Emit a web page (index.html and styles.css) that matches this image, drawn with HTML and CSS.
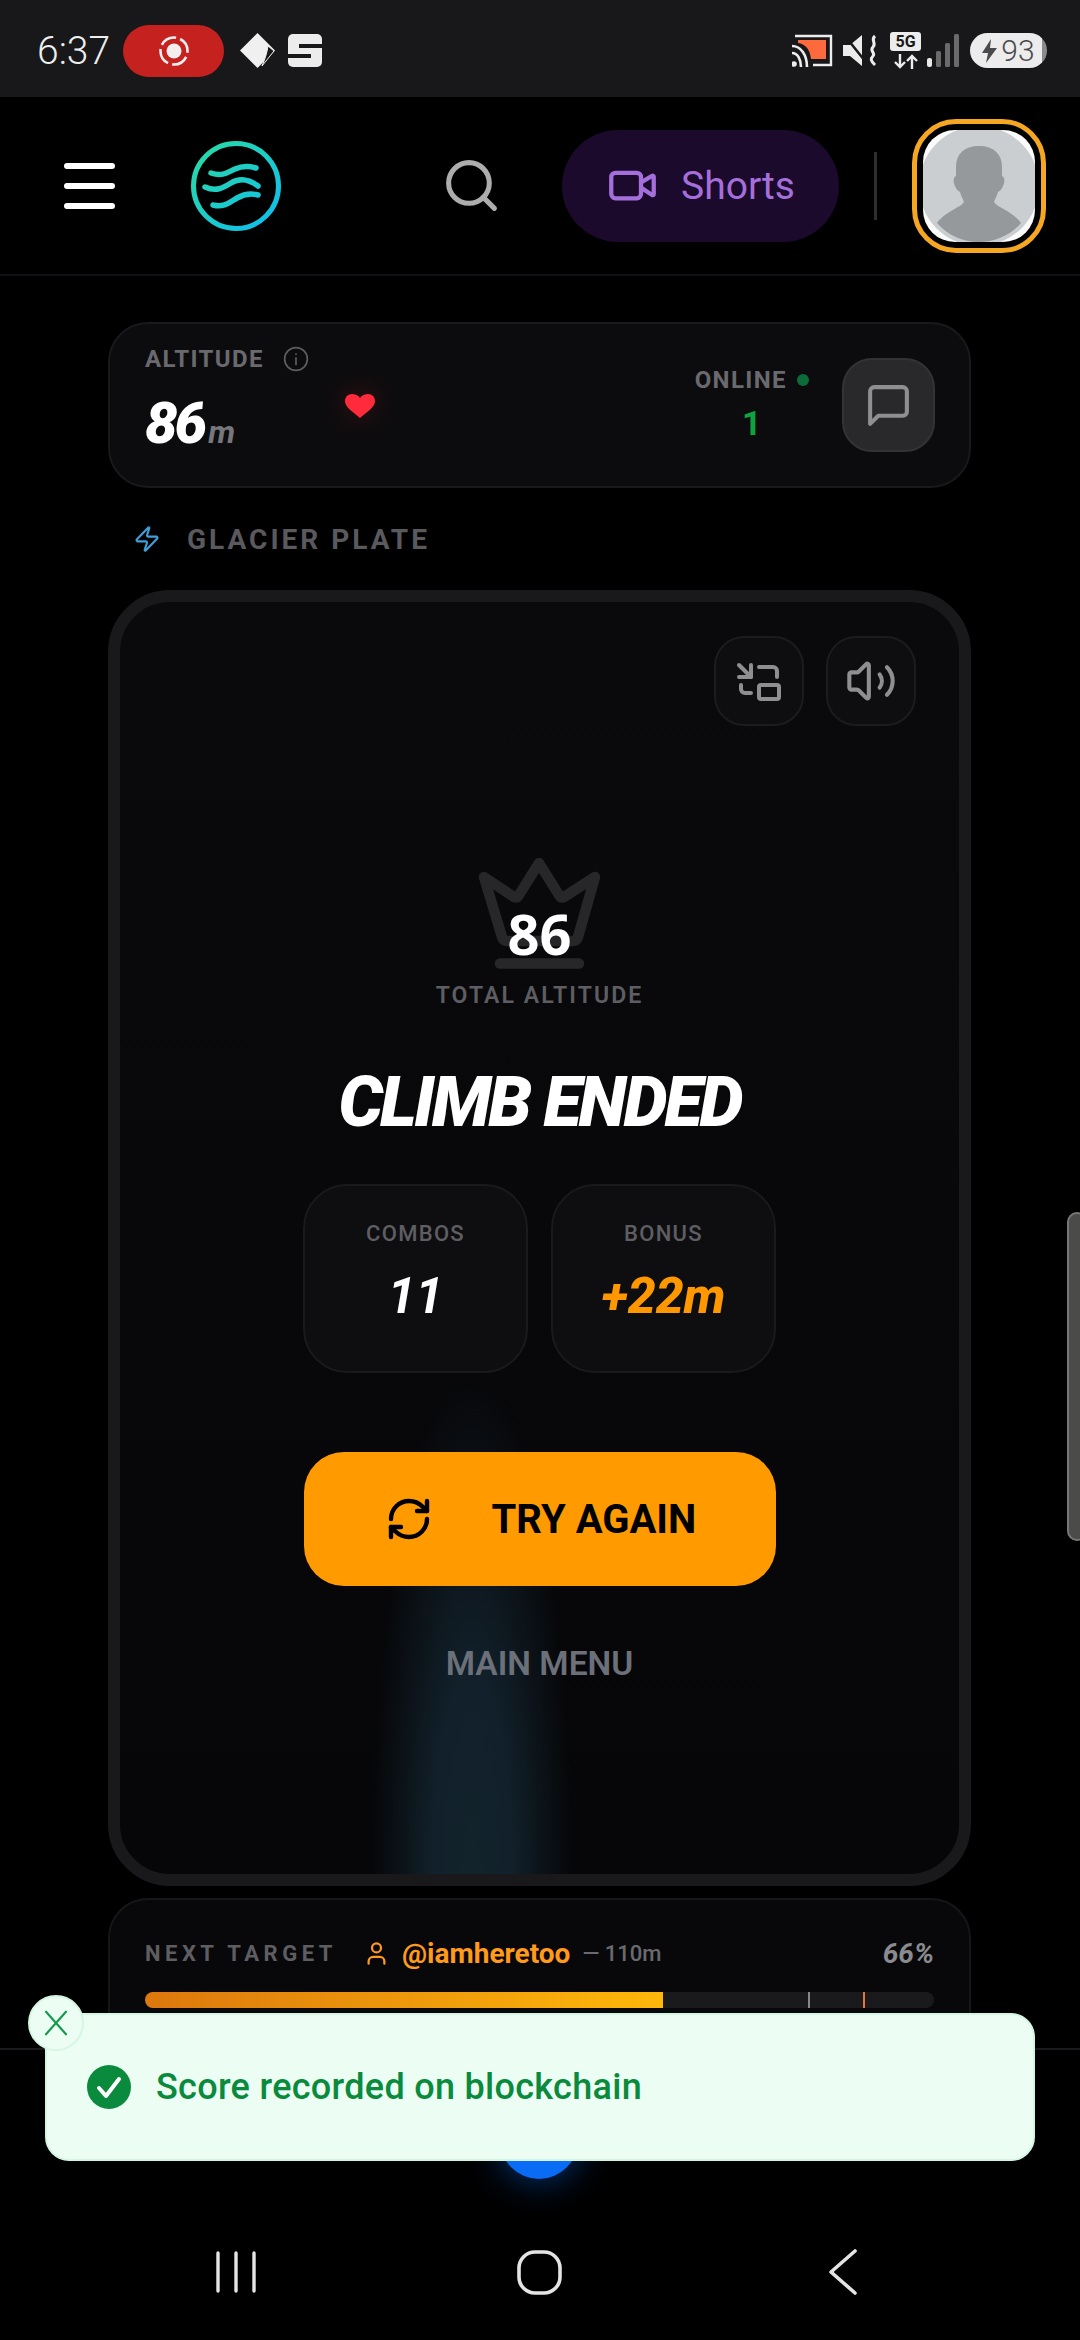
FILE: index.html
```html
<!DOCTYPE html>
<html lang="en">
<head>
    <meta charset="UTF-8">
    <meta name="viewport" content="width=device-width, initial-scale=1.0">
    <title>Glacier Plate</title>
    <link rel="stylesheet" href="styles.css">
</head>
<body>
<div class="screen">
    <div class="status-bar">
        <span class="status-time">6:37</span>
        <span class="rec-pill">
            <svg width="34" height="34" viewBox="0 0 34 34" fill="none" stroke="#f4eeee" stroke-width="2.6">
                <circle cx="17" cy="17" r="7.5" fill="#f4eeee" stroke="none"/>
                <circle cx="17" cy="17" r="13.5" stroke-dasharray="17 4.2" stroke-dashoffset="-6"/>
            </svg>
        </span>
        <svg class="status-diamond" width="35" height="35" viewBox="0 0 35 35">
            <path d="M17.500 0 35 17.500 17.500 35 0 17.500z" fill="#f0f0f0"/>
            <path d="M22 33 34 18 28 13c-1 7-3 13-6 20z" fill="#18181a" stroke="#f0f0f0" stroke-width="1"/>
        </svg>
        <svg class="status-s" width="34" height="33" viewBox="0 0 34 33">
            <rect width="34" height="33" rx="5" fill="#ececec"/>
            <rect x="11" y="10" width="23" height="4" fill="#18181a"/>
            <rect x="0" y="20" width="23" height="4" fill="#18181a"/>
        </svg>
        <div class="status-right">
            <svg width="41" height="33" viewBox="0 0 41 33" fill="none">
                <path d="M3 2h36v29H21" stroke="#ececec" stroke-width="2.4"/>
                <path d="M6 6h28v19H19C18 16 14 10 6 9z" fill="#ff6a3c"/>
                <path d="M0 12c9 0 15 9 15 21M0 19c6 0 9 7 9 14" stroke="#ececec" stroke-width="2.6"/>
                <circle cx="2" cy="30" r="2.800" fill="#ececec"/>
            </svg>
            <svg class="status-mute" width="35" height="33" viewBox="0 0 35 33" fill="none">
                <path d="M0 11h7L19 1v31L7 22H0z" fill="#ececec"/>
                <path d="M2 2 22 27" stroke="#18181a" stroke-width="2.500"/>
                <path d="M32 2c-5 4 2 7-2 11s3 6 0 9-2 5 2 9" stroke="#ececec" stroke-width="3"/>
            </svg>
            <span class="net-badge">
                <span class="net-5g">5G</span>
                <svg width="26" height="15" viewBox="0 0 26 15" fill="none" stroke="#ececec" stroke-width="2.400">
                    <path d="M7 0v13M2 8l5 5 5-5M19 15V2M14 7l5-5 5 5"/>
                </svg>
            </span>
            <svg width="32" height="33" viewBox="0 0 32 33">
                <rect x="0" y="24" width="5" height="9" rx="2" fill="#e8e8e8"/>
                <rect x="9" y="17" width="5" height="16" rx="1.500" fill="#6a6a6a"/>
                <rect x="18" y="9" width="5" height="24" rx="1.500" fill="#6a6a6a"/>
                <rect x="27" y="0" width="5" height="33" rx="1.500" fill="#6a6a6a"/>
            </svg>
            <span class="battery">
                <svg width="15" height="24" viewBox="0 0 15 24"><path d="M9 0 0 14h6l-2 10 11-15H8z" fill="#4a4a4c"/></svg>
                <span>93</span>
            </span>
        </div>
    </div>

    <header class="top-nav">
        <div class="menu-icon"><i></i><i></i><i></i></div>
        <svg class="logo" width="90" height="90" viewBox="0 0 90 90" fill="none" stroke="url(#logoGrad)" stroke-linecap="round">
            <defs>
                <linearGradient id="logoGrad" x1="0" y1="0" x2="90" y2="90" gradientUnits="userSpaceOnUse">
                    <stop offset="0" stop-color="#2bdc9f"/>
                    <stop offset="1" stop-color="#0dbcf2"/>
                </linearGradient>
            </defs>
            <circle cx="45" cy="45" r="42.500" stroke-width="5"/>
            <path d="M20 32c12 4 17-1 24-4s14-3 21-1" stroke-width="5.500"/>
            <path d="M14 46c11 5 18 1 26-4s18-4 27 3" stroke-width="5.500"/>
            <path d="M22 64c11 3 17-3 24-7s13-5 21-3" stroke-width="5.500"/>
        </svg>
        <div class="nav-right">
            <svg class="search-icon" width="61" height="61" viewBox="0 0 24 24" fill="none" stroke="#adadad" stroke-width="2" stroke-linecap="round">
                <circle cx="11" cy="11" r="8"/>
                <path d="m21 21-4.340-4.340"/>
            </svg>
            <div class="shorts-pill">
                <svg width="51" height="51" viewBox="0 0 24 24" fill="none" stroke="#a56fdb" stroke-width="2" stroke-linecap="round" stroke-linejoin="round">
                    <path d="m16 13 5.223 3.482a.5.5 0 0 0 .777-.416V7.870a.5.5 0 0 0-.752-.432L16 10.500"/>
                    <rect x="2" y="6" width="14" height="12" rx="2"/>
                </svg>
                <span>Shorts</span>
            </div>
            <div class="nav-divider"></div>
            <div class="avatar-ring">
                <svg class="avatar" width="112" height="112" viewBox="0 0 112 112">
                    <rect width="112" height="112" fill="#fbfbfb"/>
                    <circle cx="56" cy="56" r="60" fill="#cbced1"/>
                    <path d="M56 16c-15 0-23 8-23 21v9c-3 1-3 6-1 10 1 3 3 5 5 6 1 4 3 7 4 10-4 6-18 9-27 21 10 12 26 19 42 19s32-7 42-19c-9-12-23-15-27-21 1-3 3-6 4-10 2-1 4-3 5-6 2-4 2-9-1-10v-9c0-13-8-21-23-21z" fill="#96999b"/>
                </svg>
            </div>
        </div>
    </header>

    <main class="content">
        <section class="altitude-card">
            <div class="altitude-left">
                <div class="small-label">ALTITUDE
                    <svg width="26" height="26" viewBox="0 0 24 24" fill="none" stroke="#5c5c60" stroke-width="1.600" stroke-linecap="round">
                        <circle cx="12" cy="12" r="10.500"/>
                        <path d="M12 11v6M12 7.500v.1"/>
                    </svg>
                </div>
                <div class="altitude-value">86<span>m</span></div>
            </div>
            <svg class="heart" width="30" height="24" viewBox="0 0 30 24">
                <path d="M15 24C7 17 0 13 0 7c0-4 3-7 7-7 3 0 6 1 8 4 2-3 5-4 8-4 4 0 7 3 7 7 0 6-7 10-15 17z" fill="#ff2b3a"/>
            </svg>
            <div class="online">
                <div class="small-label">ONLINE <i class="online-dot"></i></div>
                <div class="online-count">1</div>
            </div>
            <button class="chat-btn">
                <svg width="49" height="49" viewBox="0 0 24 24" fill="none" stroke="#8f8f92" stroke-width="2" stroke-linejoin="round">
                    <path d="M21 15a2 2 0 0 1-2 2H7l-4 4V5a2 2 0 0 1 2-2h14a2 2 0 0 1 2 2z"/>
                </svg>
            </button>
        </section>

        <div class="plate-row">
            <svg width="28" height="28" viewBox="0 0 24 24" fill="none" stroke="#3f9fd8" stroke-width="1.800" stroke-linejoin="round">
                <path d="M4 14a1 1 0 0 1-.78-1.630l9.900-10.200a.5.5 0 0 1 .86.460l-1.920 6.020A1 1 0 0 0 13 10h7a1 1 0 0 1 .78 1.630l-9.900 10.200a.5.5 0 0 1-.86-.460l1.920-6.020A1 1 0 0 0 11 14z"/>
            </svg>
            <span>GLACIER PLATE</span>
        </div>

        <section class="game-card">
            <div class="beam"></div>
            <div class="game-controls">
                <button class="ctrl-btn">
                    <svg width="48" height="48" viewBox="0 0 24 24" fill="none" stroke="#8f8f92" stroke-width="2" stroke-linecap="round" stroke-linejoin="round">
                        <path d="M2 10h6V4"/>
                        <path d="m2 4 6 6"/>
                        <path d="M21 10V7a2 2 0 0 0-2-2h-7"/>
                        <path d="M3 14v2a2 2 0 0 0 2 2h3"/>
                        <rect x="12" y="14" width="10" height="7" rx="1"/>
                    </svg>
                </button>
                <button class="ctrl-btn">
                    <svg width="52" height="52" viewBox="0 0 24 24" fill="none" stroke="#8f8f92" stroke-width="1.900" stroke-linecap="round" stroke-linejoin="round">
                        <path d="M11 4.702a.705.705 0 0 0-1.203-.498L6.413 7.587A1.400 1.400 0 0 1 5.416 8H3a1 1 0 0 0-1 1v6a1 1 0 0 0 1 1h2.416a1.400 1.400 0 0 1 .997.413l3.383 3.384A.705.705 0 0 0 11 19.298z"/>
                        <path d="M16 9a5 5 0 0 1 0 6"/>
                        <path d="M19.364 18.364a9 9 0 0 0 0-12.728"/>
                    </svg>
                </button>
            </div>

            <div class="crown-wrap">
                <svg width="123" height="114" viewBox="0 0 123 114" fill="none" stroke="#27272a" stroke-width="10.500" stroke-linecap="round" stroke-linejoin="round">
                    <path d="M6 21 36 41c2 1 3 1 5-2L61 7l20 32c2 3 3 3 5 2l31-20-17 60c-1 3-2 4-5 4H29c-3 0-4-1-5-4z"/>
                    <path d="M22 107.500h79"/>
                </svg>
                <span class="crown-score">86</span>
            </div>
            <div class="total-label">TOTAL ALTITUDE</div>
            <h1 class="game-title">CLIMB ENDED</h1>

            <div class="stats">
                <div class="stat-box">
                    <div class="stat-label">COMBOS</div>
                    <div class="stat-value">11</div>
                </div>
                <div class="stat-box">
                    <div class="stat-label">BONUS</div>
                    <div class="stat-value orange">+22m</div>
                </div>
            </div>

            <button class="try-btn">
                <svg width="48" height="48" viewBox="0 0 24 24" fill="none" stroke="#000" stroke-width="2.200" stroke-linecap="round" stroke-linejoin="round">
                    <path d="M3 12a9 9 0 0 1 9-9 9.750 9.750 0 0 1 6.740 2.740L21 8"/>
                    <path d="M21 3v5h-5"/>
                    <path d="M21 12a9 9 0 0 1-9 9 9.750 9.750 0 0 1-6.740-2.740L3 16"/>
                    <path d="M8 16H3v5"/>
                </svg>
                <span>TRY AGAIN</span>
            </button>
            <div class="main-menu">MAIN MENU</div>
        </section>

        <section class="target-card">
            <div class="target-row">
                <span class="target-label">NEXT TARGET</span>
                <svg width="27" height="27" viewBox="0 0 24 24" fill="none" stroke="#ff9a1a" stroke-width="2" stroke-linecap="round">
                    <path d="M19 21v-2a4 4 0 0 0-4-4H9a4 4 0 0 0-4 4v2"/>
                    <circle cx="12" cy="7" r="4"/>
                </svg>
                <span class="target-name">@iamheretoo</span>
                <span class="target-dist">— 110m</span>
                <span class="target-pct">66%</span>
            </div>
            <div class="progress">
                <div class="progress-fill" style="width: 65.7%"></div>
                <i class="tick tick-gray"></i>
                <i class="tick tick-orange"></i>
            </div>
        </section>
    </main>

    <nav class="bottom-bar">
        <div class="blue-fab"></div>
        <div class="android-nav">
            <svg width="40" height="42" viewBox="0 0 40 42" fill="none" stroke="#e4e4e4" stroke-width="3.400" stroke-linecap="round">
                <path d="M2 2v38M20 2v38M38 2v38"/>
            </svg>
            <svg width="45" height="45" viewBox="0 0 45 45" fill="none" stroke="#e4e4e4" stroke-width="3.600">
                <rect x="2" y="2" width="41" height="41" rx="16"/>
            </svg>
            <svg width="29" height="46" viewBox="0 0 29 46" fill="none" stroke="#e4e4e4" stroke-width="3.600" stroke-linecap="round" stroke-linejoin="round">
                <path d="M27 2 3 23l24 21"/>
            </svg>
        </div>
    </nav>

    <div class="toast">
        <button class="toast-close">
            <svg width="30" height="30" viewBox="0 0 24 24" fill="none" stroke="#159a4b" stroke-width="1.700" stroke-linecap="round">
                <path d="M4 3l16 18M20 3 4 21"/>
            </svg>
        </button>
        <svg width="44" height="44" viewBox="0 0 44 44" fill="none">
            <circle cx="22" cy="22" r="22" fill="#0a8a3c"/>
            <path d="M12 23l7 8 13-17" stroke="#fff" stroke-width="4" stroke-linecap="round" stroke-linejoin="round"/>
        </svg>
        <span>Score recorded on blockchain</span>
    </div>

    <div class="scroll-thumb"></div>
</div>
</body>
</html>
```

FILE: styles.css
```css
* {
    box-sizing: border-box;
}

body {
    margin: 0;
    background-color: #000;
    font-family: Roboto, "Liberation Sans", sans-serif;
}

button {
    border: none;
    padding: 0;
    font-family: inherit;
}

.screen {
    position: relative;
    width: 1080px;
    height: 2340px;
    overflow: hidden;
    background-color: #000;
}

/* status bar */
.status-bar {
    display: flex;
    align-items: center;
    height: 97px;
    padding: 4px 33px 0 37px;
    background-color: #18181a;
}

.status-time {
    width: 72px;
    margin-right: 14px;
    font-size: 39px;
    font-weight: 300;
    color: #eee;
}

.rec-pill {
    display: flex;
    align-items: center;
    justify-content: center;
    width: 101px;
    height: 52px;
    margin-right: 16px;
    border-radius: 26px;
    background-color: #c4211f;
}

.status-diamond {
    margin-right: 13px;
}

.status-right {
    display: flex;
    align-items: center;
    gap: 6px;
    margin-left: auto;
}

.status-mute {
    margin-left: 4px;
}

.net-badge {
    display: flex;
    flex-direction: column;
    align-items: center;
    gap: 3px;
    width: 31px;
    margin-left: 6px;
}

.net-5g {
    width: 31px;
    height: 19px;
    border-radius: 3px;
    background-color: #ececec;
    color: #18181a;
    font-size: 16px;
    font-weight: 700;
    line-height: 19px;
    text-align: center;
}

.battery {
    display: flex;
    align-items: center;
    justify-content: center;
    gap: 4px;
    width: 77px;
    height: 35px;
    margin-left: 5px;
    border-radius: 18px;
    background: linear-gradient(90deg, #ececec 94%, #8a8a8a 94%);
    color: #4a4a4c;
    font-size: 30px;
    font-weight: 300;
}

/* top nav */
.top-nav {
    display: flex;
    align-items: center;
    height: 179px;
    padding: 0 34px 0 64px;
    border-bottom: 2px solid #111113;
}

.menu-icon {
    display: flex;
    flex-direction: column;
    gap: 14px;
    width: 51px;
    margin-right: 76px;
}

.menu-icon i {
    height: 6px;
    border-radius: 3px;
    background-color: #fff;
}

.nav-right {
    display: flex;
    align-items: center;
    margin-left: auto;
}

.search-icon {
    margin-right: 60px;
}

.shorts-pill {
    display: flex;
    align-items: center;
    gap: 23px;
    width: 277px;
    height: 112px;
    padding-left: 45px;
    border-radius: 56px;
    background-color: #1b0a2c;
    color: #a56fdb;
    font-size: 39px;
}

.nav-divider {
    width: 3px;
    height: 68px;
    margin: 0 35px;
    background-color: #2e2e30;
}

.avatar-ring {
    width: 134px;
    height: 134px;
    padding: 6px;
    border: 5px solid #f5a623;
    border-radius: 44px;
    background-color: #000;
}

.avatar {
    display: block;
    border-radius: 32px;
}

/* page content */
.content {
    display: flex;
    flex-direction: column;
    padding: 46px 109px 0 108px;
}

.altitude-card {
    position: relative;
    display: flex;
    align-items: center;
    flex-shrink: 0;
    height: 166px;
    padding: 0 34px 0 35px;
    border: 2px solid #19191b;
    border-radius: 40px;
    background-color: #0c0c0e;
}

.small-label {
    display: flex;
    align-items: center;
    gap: 19px;
    font-size: 24px;
    font-weight: 700;
    line-height: 24px;
    letter-spacing: 1.400px;
    color: #6a6a6e;
}

.altitude-left {
    width: 200px;
    margin-top: -2px;
}

.altitude-value {
    margin-top: 20px;
    font-size: 58px;
    font-weight: 900;
    font-style: italic;
    line-height: 62px;
    letter-spacing: -3px;
    color: #fff;
}

.altitude-value span {
    margin-left: 4px;
    font-size: 32px;
    font-weight: 700;
    letter-spacing: 0;
    color: #77777b;
}

.heart {
    margin-top: 2px;
    filter: drop-shadow(0 0 14px rgba(255, 40, 40, 0.25));
}

.online {
    margin-left: auto;
    margin-right: 33px;
    text-align: center;
}

.online .small-label {
    gap: 10px;
}

.online-dot {
    display: inline-block;
    width: 12px;
    height: 12px;
    border-radius: 50%;
    background-color: #0d6b3a;
}

.online-count {
    margin-top: 11px;
    font-size: 34px;
    font-weight: 700;
    line-height: 40px;
    color: #0ea33f;
}

.chat-btn {
    display: flex;
    align-items: center;
    justify-content: center;
    width: 93px;
    height: 94px;
    border: 2px solid #333336;
    border-radius: 30px;
    background-color: #29292c;
}

.plate-row {
    display: flex;
    align-items: center;
    gap: 26px;
    height: 102px;
    padding-left: 25px;
    font-size: 28px;
    font-weight: 700;
    letter-spacing: 3px;
    color: #5a5a5e;
}

.game-card {
    position: relative;
    display: flex;
    flex-direction: column;
    align-items: center;
    flex-shrink: 0;
    height: 1296px;
    padding: 34px 43px 0;
    border: 12px solid #19191b;
    border-radius: 62px;
    background: linear-gradient(180deg, #0a0a0d 0%, #060608 100%);
    overflow: hidden;
}

.beam {
    position: absolute;
    left: 252px;
    bottom: 0;
    width: 200px;
    height: 500px;
    background: radial-gradient(ellipse 50% 100% at 50% 100%, #13232c 0%, #11202a 40%, rgba(17, 32, 42, 0) 100%);
}

.game-controls {
    position: relative;
    display: flex;
    justify-content: flex-end;
    gap: 22px;
    width: 100%;
}

.ctrl-btn {
    display: flex;
    align-items: center;
    justify-content: center;
    width: 90px;
    height: 90px;
    border: 2px solid #1c1c1f;
    border-radius: 30px;
    background-color: #0e0e10;
}

.crown-wrap {
    position: relative;
    width: 123px;
    height: 114px;
    margin-top: 130px;
}

.crown-wrap svg {
    display: block;
}

.crown-score {
    position: absolute;
    top: 37px;
    left: 0;
    width: 100%;
    font-family: "Open Sans", sans-serif;
    font-size: 56px;
    font-weight: 700;
    line-height: 80px;
    text-align: center;
    color: #fff;
}

.total-label {
    margin-top: 13px;
    font-size: 23px;
    font-weight: 600;
    line-height: 26px;
    letter-spacing: 2.100px;
    color: #5e5e62;
}

.game-title {
    margin: 51px 0 0;
    font-size: 70px;
    font-weight: 900;
    font-style: italic;
    line-height: 84px;
    letter-spacing: -2.900px;
    color: #fff;
}

.stats {
    display: flex;
    gap: 23px;
    margin-top: 40px;
}

.stat-box {
    display: flex;
    flex-direction: column;
    align-items: center;
    width: 225px;
    height: 189px;
    padding-top: 35px;
    border: 2px solid #1a1a1c;
    border-radius: 44px;
    background-color: #0e0e10;
}

.stat-label {
    font-size: 22px;
    font-weight: 500;
    line-height: 26px;
    letter-spacing: 1.300px;
    color: #5e5e62;
}

.stat-value {
    margin-top: 19px;
    font-size: 50px;
    font-weight: 700;
    font-style: italic;
    line-height: 60px;
    color: #fff;
}

.stat-value.orange {
    font-weight: 800;
    color: #ff9800;
}

.try-btn {
    position: relative;
    display: flex;
    align-items: center;
    width: 472px;
    height: 134px;
    margin-top: 79px;
    padding-left: 81px;
    border-radius: 40px;
    background-color: #ff9a00;
    color: #000;
    font-size: 40px;
    font-weight: 700;
}

.try-btn span {
    margin-left: 59px;
}

.main-menu {
    position: relative;
    margin-top: 58px;
    font-size: 33.500px;
    font-weight: 600;
    line-height: 40px;
    color: #6b7079;
}

.target-card {
    flex-shrink: 0;
    height: 200px;
    margin-top: 12px;
    padding: 33px 35px 0;
    border: 2px solid #161618;
    border-radius: 40px;
    background-color: #08080a;
}

.target-row {
    display: flex;
    align-items: center;
    height: 40px;
}

.target-label {
    width: 218px;
    font-size: 22px;
    font-weight: 700;
    letter-spacing: 4.500px;
    color: #5e5e62;
}

.target-name {
    margin-left: 12px;
    font-size: 28px;
    font-weight: 700;
    color: #ff9a1a;
}

.target-dist {
    margin-left: 12px;
    font-size: 22px;
    font-weight: 500;
    color: #6a6a6e;
}

.target-pct {
    margin-left: auto;
    font-size: 28px;
    font-weight: 700;
    font-style: italic;
    color: #8a8a8f;
}

.progress {
    position: relative;
    height: 16px;
    margin-top: 19px;
    border-radius: 8px;
    background-color: #1a1a1c;
    overflow: hidden;
}

.progress-fill {
    height: 100%;
    background: linear-gradient(90deg, #dd780d, #ffb80a);
}

.tick {
    position: absolute;
    top: 0;
    width: 2px;
    height: 100%;
}

.tick-gray {
    left: 84%;
    background-color: #88888c;
}

.tick-orange {
    left: 91%;
    background-color: #e8733c;
}

/* bottom nav overlays the page */
.bottom-bar {
    position: absolute;
    left: 0;
    top: 2048px;
    width: 1080px;
    height: 292px;
    border-top: 2px solid #1a1a1c;
    background-color: #000;
}

.blue-fab {
    position: absolute;
    left: 500px;
    top: 51px;
    width: 78px;
    height: 78px;
    border-radius: 50%;
    background-color: #0a6cf5;
    box-shadow: 0 0 36px rgba(10, 110, 245, 0.55);
}

.android-nav {
    position: absolute;
    left: 0;
    bottom: 45px;
    display: grid;
    grid-template-columns: 303px 303px 303px;
    justify-content: center;
    justify-items: center;
    align-items: center;
    width: 1078px;
}

.android-nav svg {
    display: block;
}

.toast {
    position: absolute;
    left: 45px;
    top: 2013px;
    display: flex;
    align-items: center;
    gap: 25px;
    width: 990px;
    height: 148px;
    padding-left: 40px;
    border: 2px solid #d4f6e3;
    border-radius: 24px;
    background-color: #ecfdf3;
    color: #0a8a3c;
    font-size: 36px;
    font-weight: 500;
    letter-spacing: 0.300px;
}

.toast-close {
    position: absolute;
    left: -19px;
    top: -20px;
    display: flex;
    align-items: center;
    justify-content: center;
    width: 56px;
    height: 56px;
    border: 2px solid #d6f5e3;
    border-radius: 50%;
    background-color: #ecfdf3;
}

.scroll-thumb {
    position: absolute;
    right: -7px;
    top: 1212px;
    width: 20px;
    height: 329px;
    border: 2px solid #777;
    border-radius: 10px;
    background-color: #4b4b49;
}
```
